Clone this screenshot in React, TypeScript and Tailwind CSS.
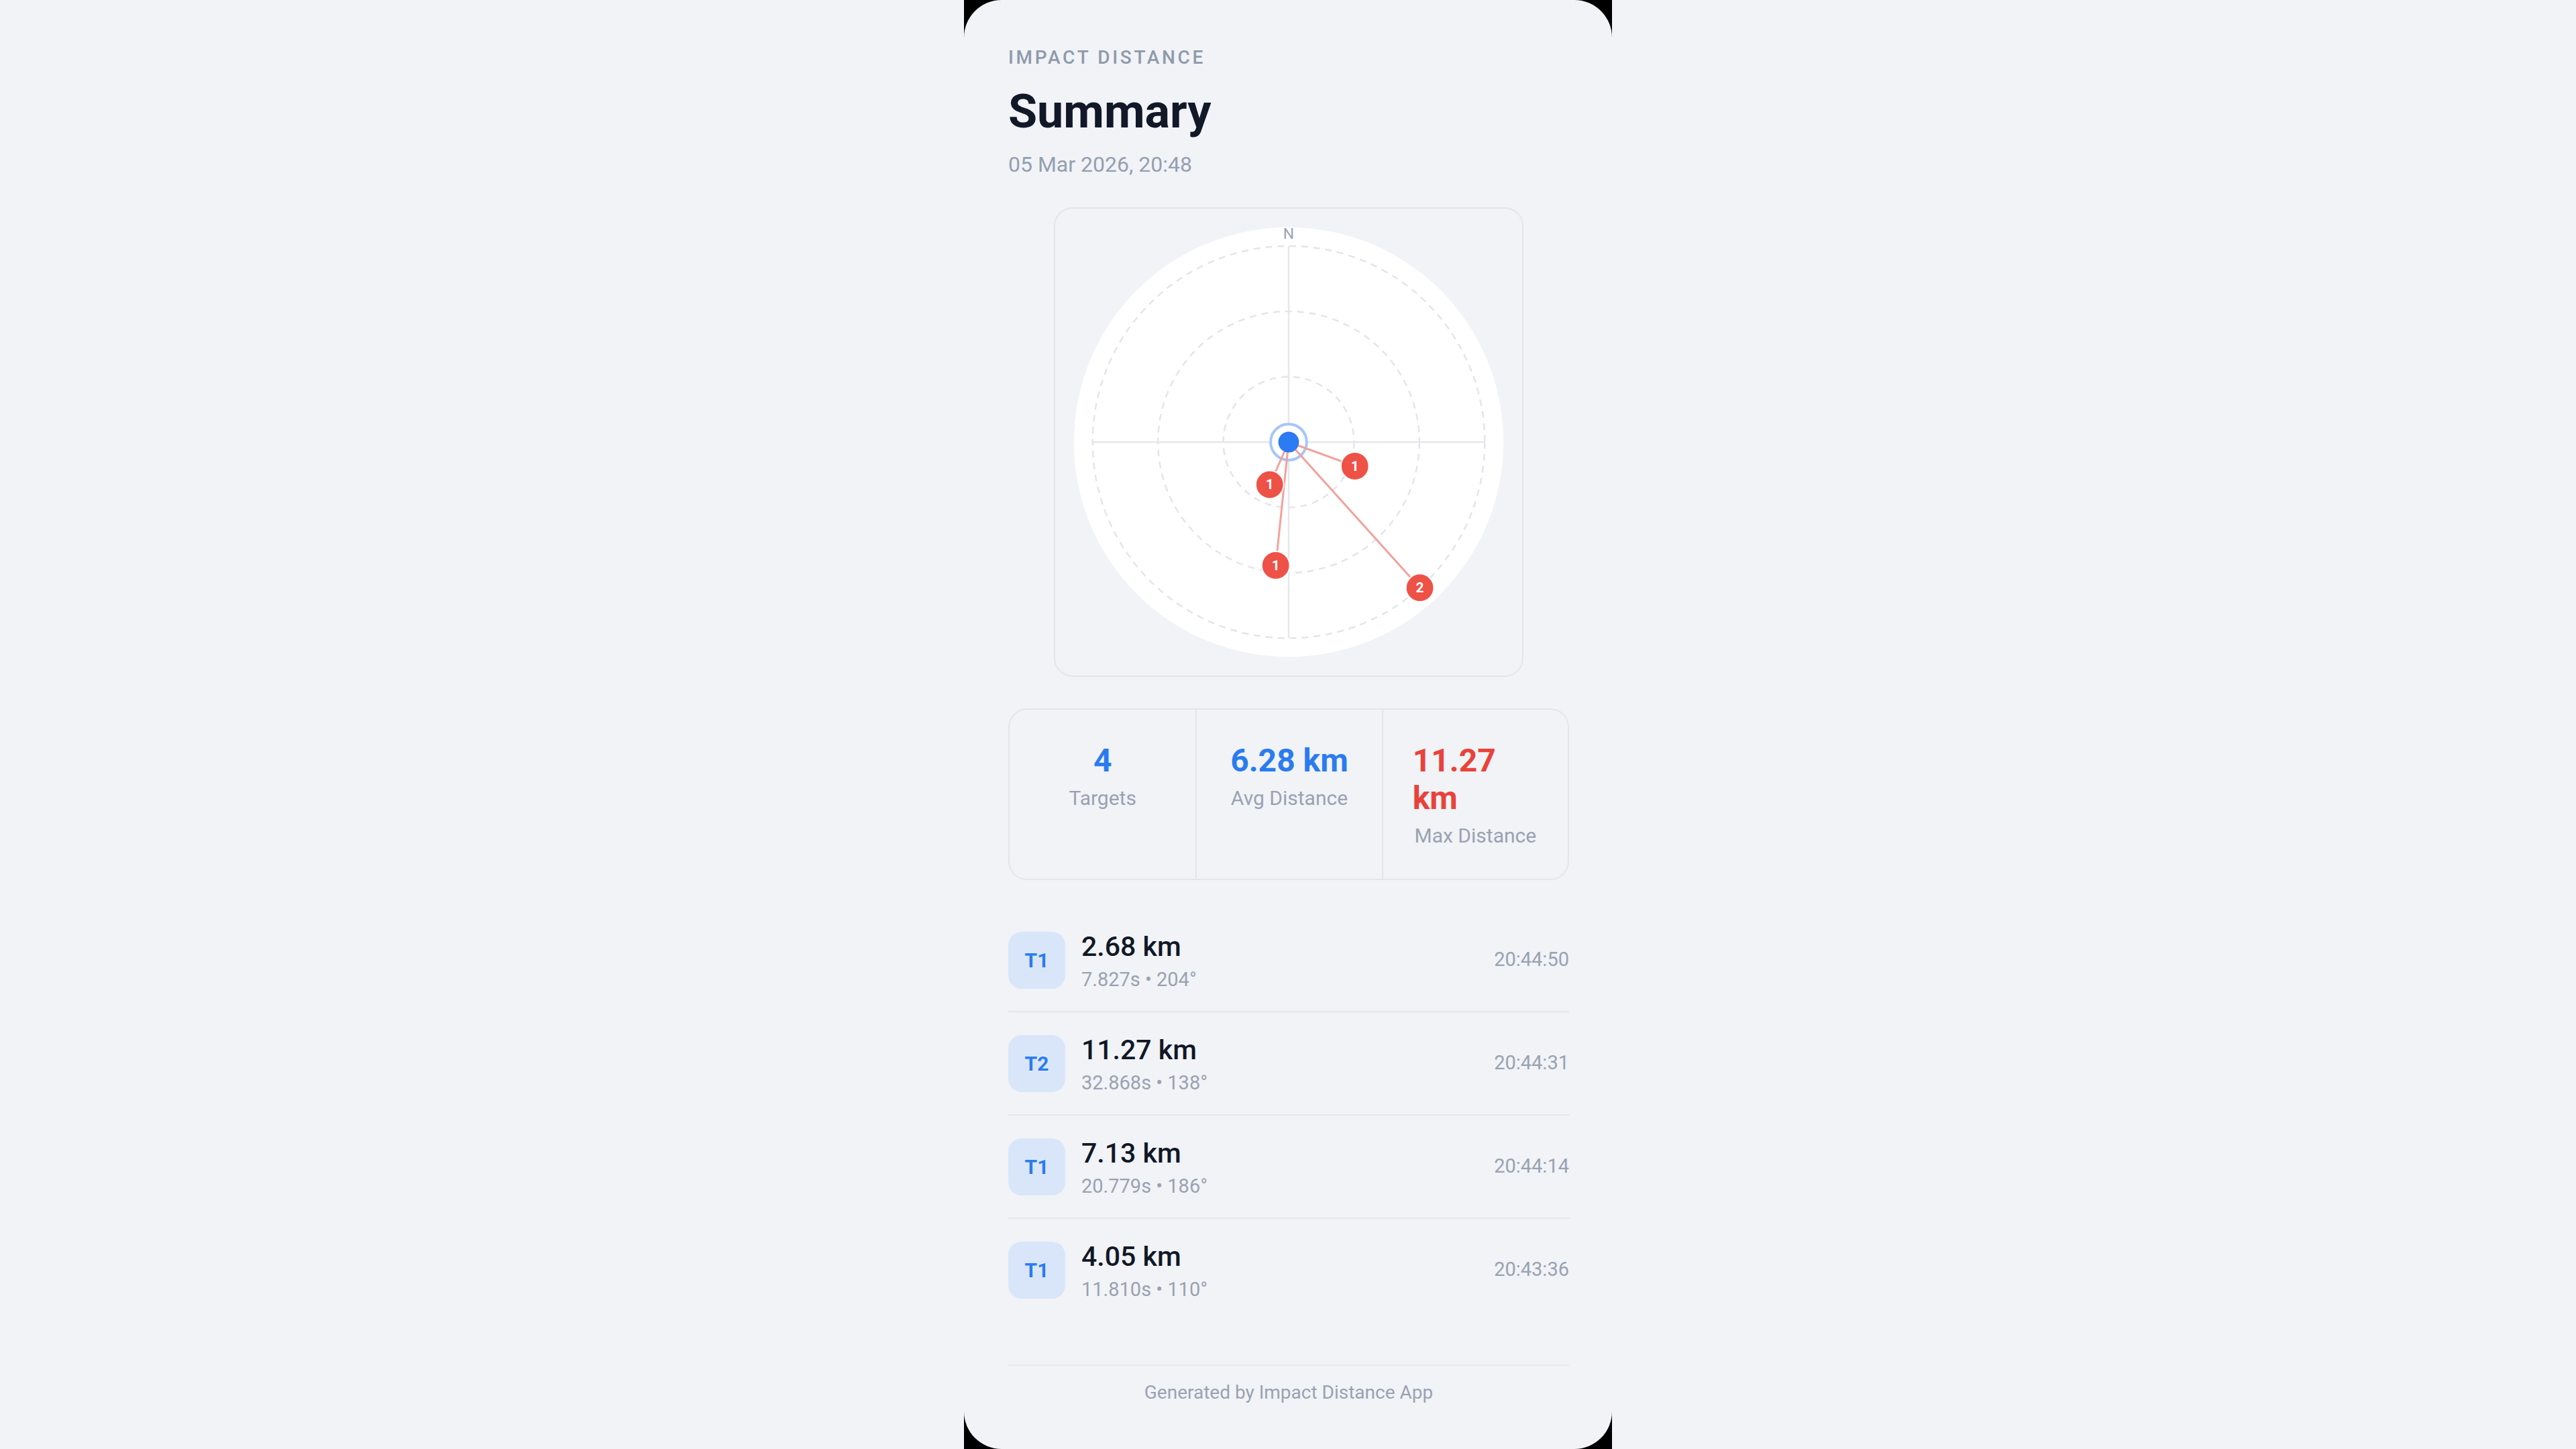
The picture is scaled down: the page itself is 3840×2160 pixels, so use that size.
const hits = [
  { id: 1, km: 2.68, secs: "7.827s", deg: 204, time: "20:44:50" },
  { id: 2, km: 11.27, secs: "32.868s", deg: 138, time: "20:44:31" },
  { id: 1, km: 7.13, secs: "20.779s", deg: 186, time: "20:44:14" },
  { id: 1, km: 4.05, secs: "11.810s", deg: 110, time: "20:43:36" },
];

const maxKm = Math.max(...hits.map((h) => h.km));

function Radar() {
  const c = 350;
  const R = 294;
  const pts = hits.map((h) => {
    const r = (h.km / maxKm) * R;
    const a = (h.deg * Math.PI) / 180;
    return { ...h, x: c + r * Math.sin(a), y: c - r * Math.cos(a) };
  });
  return (
    <svg width="700" height="700" viewBox="0 0 700 700">
      <circle cx={c} cy={c} r={322} fill="#ffffff" />
      {[R / 3, (2 * R) / 3, R].map((r) => (
        <circle key={r} cx={c} cy={c} r={r} fill="none" stroke="#e3e5ea" strokeWidth="2.5" strokeDasharray="10 8" />
      ))}
      <line x1={c - R} y1={c} x2={c + R} y2={c} stroke="#e5e7eb" strokeWidth="2.5" />
      <line x1={c} y1={c - R} x2={c} y2={c + R} stroke="#e5e7eb" strokeWidth="2.5" />
      <text x={c} y={45} textAnchor="middle" fontSize="23" fill="#9aa3b1" fontFamily="Roboto, sans-serif">
        N
      </text>
      {/* origin ring sits under the bearing lines, the dot on top */}
      <circle cx={c} cy={c} r={27} fill="#ffffff" stroke="#a6c6f8" strokeWidth="4" />
      {pts.map((p, i) => (
        <line key={i} x1={c} y1={c} x2={p.x} y2={p.y} stroke="#f3a19b" strokeWidth="3" />
      ))}
      <circle cx={c} cy={c} r={15.5} fill="#2b7bf3" />
      {pts.map((p, i) => (
        <g key={"m" + i}>
          <circle cx={p.x} cy={p.y} r={21} fill="#ee5247" stroke="#ffffff" strokeWidth="2" />
          <text x={p.x} y={p.y + 7} textAnchor="middle" fontSize="21" fontWeight="700" fill="#ffffff" fontFamily="Roboto, sans-serif">
            {p.id}
          </text>
        </g>
      ))}
    </svg>
  );
}

export default function App() {
  return (
    <div className="min-h-screen h-[2160px] bg-[#f1f3f7] flex justify-center font-['Roboto',sans-serif]">
      <div className="w-[966px] h-[2160px] bg-black">
        <div className="h-full rounded-[56px] bg-[#f1f3f7] pl-[66px] pr-[64px] pt-[66px] flex flex-col">
          <p className="text-[28px] leading-[40px] font-medium tracking-[0.13em] text-[#8f9aab]">IMPACT DISTANCE</p>
          <h1 className="mt-[18px] text-[70px] leading-[84px] font-bold text-[#111827]">Summary</h1>
          <p className="mt-[15px] text-[32px] leading-[44px] text-[#959fb0]">05 Mar 2026, 20:48</p>

          <div className="mt-[42px] mx-auto w-[700px] h-[700px] rounded-[28px] border-2 border-[#e2e5ea] flex items-center justify-center overflow-hidden">
            <Radar />
          </div>

          <div className="mt-[47px] grid grid-cols-3 rounded-[28px] border-2 border-[#e2e5ea]">
            <div className="flex flex-col items-center px-[44px] pt-[48px] pb-[44px]">
              <span className="text-[48px] leading-[56px] font-bold text-[#2b7bf0]">4</span>
              <span className="mt-[8px] text-[30px] leading-[40px] text-[#9aa2b1]">Targets</span>
            </div>
            <div className="flex flex-col items-center px-[44px] pt-[48px] pb-[44px] border-l-2 border-[#e2e5ea]">
              <span className="text-[48px] leading-[56px] font-bold text-[#2b7bf0]">6.28 km</span>
              <span className="mt-[8px] text-[30px] leading-[40px] text-[#9aa2b1]">Avg Distance</span>
            </div>
            <div className="flex flex-col items-center px-[44px] pt-[48px] pb-[44px] border-l-2 border-[#e2e5ea]">
              <span className="text-[48px] leading-[56px] font-bold text-[#e8433a]">11.27 km</span>
              <span className="mt-[8px] text-[30px] leading-[40px] text-[#9aa2b1]">Max Distance</span>
            </div>
          </div>

          <div className="mt-[43px] flex flex-col">
            {hits.map((h, i) => (
              <div
                key={i}
                className={
                  "flex items-center py-[29px] " + (i < hits.length - 1 ? "border-b-2 border-[#e3e6eb]" : "")
                }
              >
                <div className="w-[85px] h-[85px] rounded-[20px] bg-[#d9e6fa] flex items-center justify-center text-[30px] font-bold text-[#2b7bf0]">
                  T{h.id}
                </div>
                <div className="ml-[24px] flex flex-col">
                  <span className="text-[41px] leading-[54px] font-medium text-[#111827]">{h.km.toFixed(2)} km</span>
                  <span className="mt-[4px] text-[29px] leading-[36px] text-[#9aa2b1]">
                    {h.secs} • {h.deg}°
                  </span>
                </div>
                <span className="ml-auto text-[29px] text-[#9aa2b1]">{h.time}</span>
              </div>
            ))}
          </div>

          <div className="mt-[65px] border-t-2 border-[#e8eaef] pt-[22px] text-center text-[28px] leading-[36px] text-[#9aa2b1]">
            Generated by Impact Distance App
          </div>
        </div>
      </div>
    </div>
  );
}
